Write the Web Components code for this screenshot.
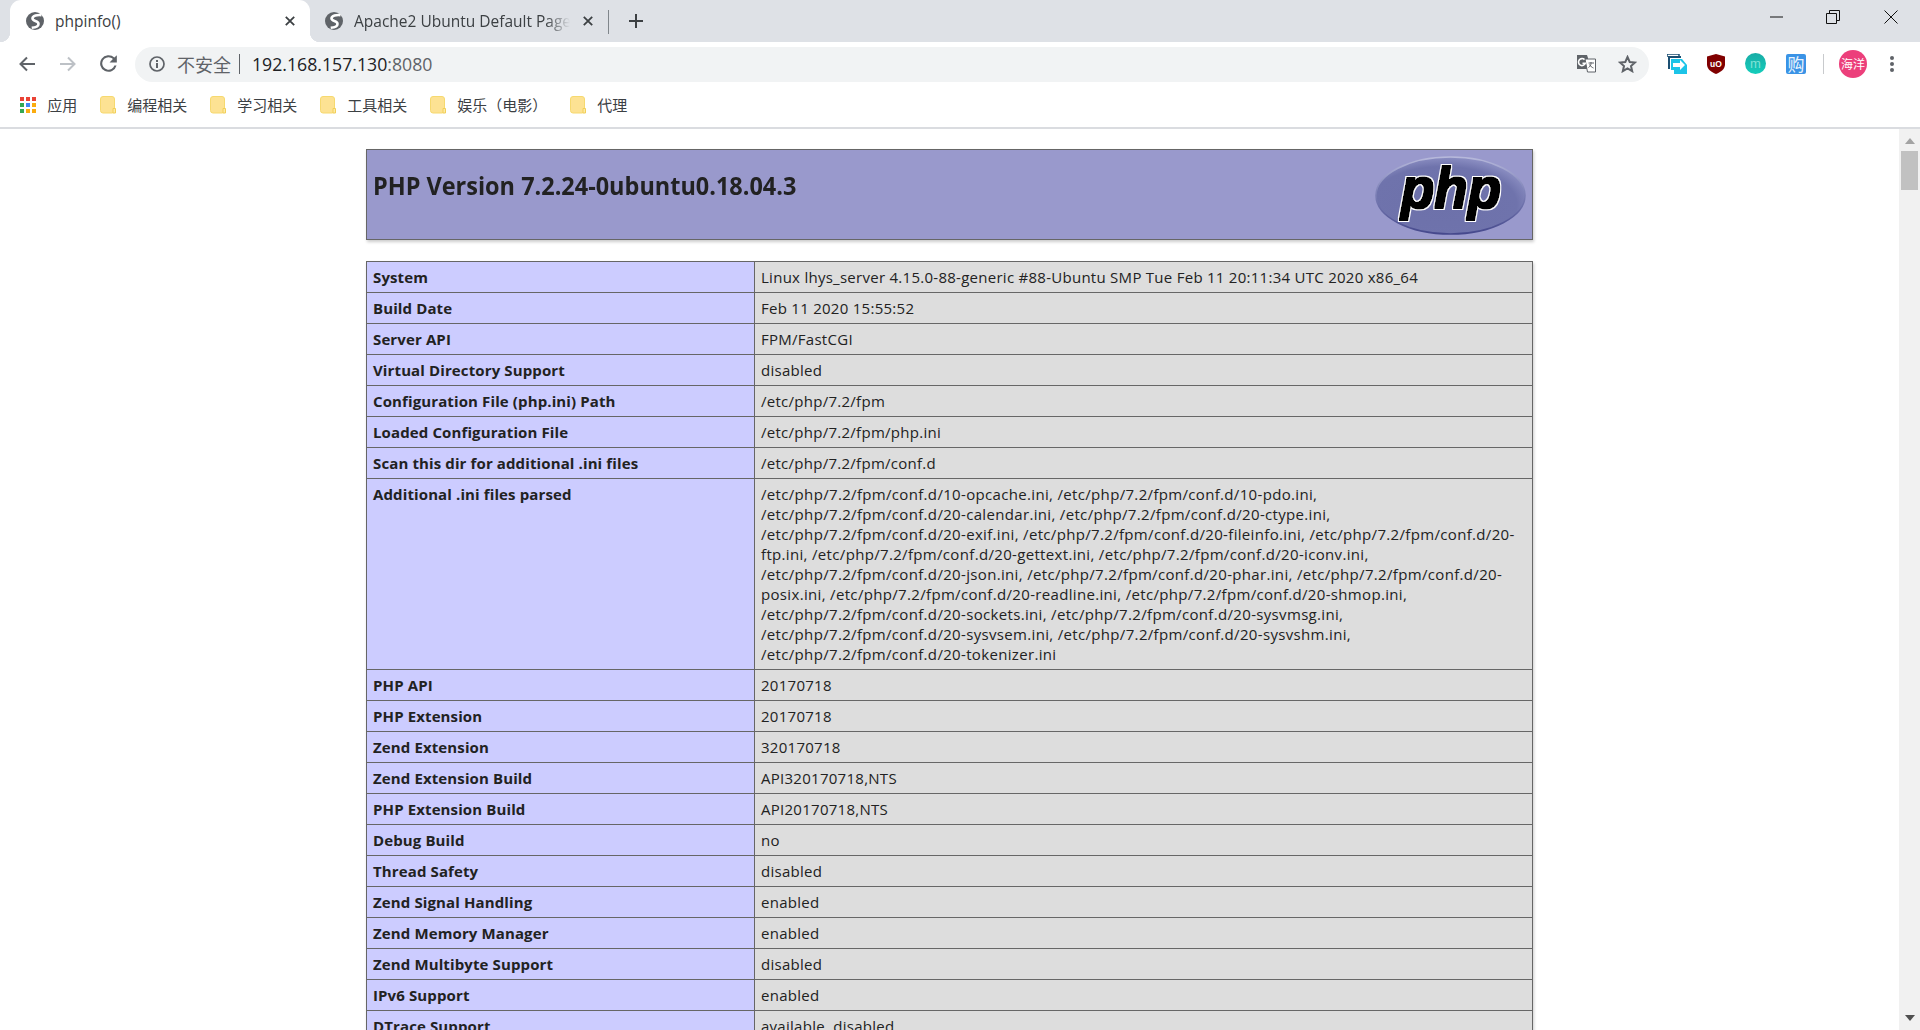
<!DOCTYPE html>
<html lang="zh">
<head>
<meta charset="utf-8">
<title>phpinfo()</title>
<style>
html,body{margin:0;height:100%;overflow:hidden;background:#fff}
body{font-family:"Open Sans","Noto Sans CJK SC",sans-serif}
</style>
</head>
<body>
<browser-window>
  <tab-strip slot="chrome">
    <browser-tab active>phpinfo()</browser-tab>
    <browser-tab>Apache2 Ubuntu Default Page</browser-tab>
  </tab-strip>
  <nav-toolbar slot="chrome"></nav-toolbar>
  <bookmark-bar slot="chrome">
    <bookmark-item kind="apps">应用</bookmark-item>
    <bookmark-item>编程相关</bookmark-item>
    <bookmark-item>学习相关</bookmark-item>
    <bookmark-item>工具相关</bookmark-item>
    <bookmark-item>娱乐（电影）</bookmark-item>
    <bookmark-item>代理</bookmark-item>
  </bookmark-bar>
  <page-view>
    <php-header>PHP Version 7.2.24-0ubuntu0.18.04.3</php-header>
    <php-table>
      <php-row label="System">Linux lhys_server 4.15.0-88-generic #88-Ubuntu SMP Tue Feb 11 20:11:34 UTC 2020 x86_64</php-row>
      <php-row label="Build Date">Feb 11 2020 15:55:52</php-row>
      <php-row label="Server API">FPM/FastCGI</php-row>
      <php-row label="Virtual Directory Support">disabled</php-row>
      <php-row label="Configuration File (php.ini) Path">/etc/php/7.2/fpm</php-row>
      <php-row label="Loaded Configuration File">/etc/php/7.2/fpm/php.ini</php-row>
      <php-row label="Scan this dir for additional .ini files">/etc/php/7.2/fpm/conf.d</php-row>
      <php-row wide label="Additional .ini files parsed">/etc/php/7.2/fpm/conf.d/10-opcache.ini, /etc/php/7.2/fpm/conf.d/10-pdo.ini,<br>/etc/php/7.2/fpm/conf.d/20-calendar.ini, /etc/php/7.2/fpm/conf.d/20-ctype.ini,<br>/etc/php/7.2/fpm/conf.d/20-exif.ini, /etc/php/7.2/fpm/conf.d/20-fileinfo.ini, /etc/php/7.2/fpm/conf.d/20-<br>ftp.ini, /etc/php/7.2/fpm/conf.d/20-gettext.ini, /etc/php/7.2/fpm/conf.d/20-iconv.ini,<br>/etc/php/7.2/fpm/conf.d/20-json.ini, /etc/php/7.2/fpm/conf.d/20-phar.ini, /etc/php/7.2/fpm/conf.d/20-<br>posix.ini, /etc/php/7.2/fpm/conf.d/20-readline.ini, /etc/php/7.2/fpm/conf.d/20-shmop.ini,<br>/etc/php/7.2/fpm/conf.d/20-sockets.ini, /etc/php/7.2/fpm/conf.d/20-sysvmsg.ini,<br>/etc/php/7.2/fpm/conf.d/20-sysvsem.ini, /etc/php/7.2/fpm/conf.d/20-sysvshm.ini,<br>/etc/php/7.2/fpm/conf.d/20-tokenizer.ini</php-row>
      <php-row label="PHP API">20170718</php-row>
      <php-row label="PHP Extension">20170718</php-row>
      <php-row label="Zend Extension">320170718</php-row>
      <php-row label="Zend Extension Build">API320170718,NTS</php-row>
      <php-row label="PHP Extension Build">API20170718,NTS</php-row>
      <php-row label="Debug Build">no</php-row>
      <php-row label="Thread Safety">disabled</php-row>
      <php-row label="Zend Signal Handling">enabled</php-row>
      <php-row label="Zend Memory Manager">enabled</php-row>
      <php-row label="Zend Multibyte Support">disabled</php-row>
      <php-row label="IPv6 Support">enabled</php-row>
      <php-row label="DTrace Support">available, disabled</php-row>
    </php-table>
  </page-view>
</browser-window>

<script>
const UI_FONT = `"Open Sans","Noto Sans CJK SC",sans-serif`;

// globe used as favicon on both tabs
const GLOBE = `<svg width="18" height="18" viewBox="0 0 18 18"><circle cx="9" cy="9" r="9" fill="#5f6368"/><path d="M15.500 3.200C11.500 2.700 6.500 3.600 6.500 6.600c0 3 6 1.900 6 5.300 0 2.400-3 3.500-6.800 3.900" fill="none" stroke="#fff" stroke-width="2.600"/></svg>`;

class BrowserWindow extends HTMLElement {
  constructor() {
    super();
    this.attachShadow({ mode: "open" });
    this.shadowRoot.innerHTML = `
    <style>
      :host{display:flex;flex-direction:column;height:100vh;overflow:hidden;font-family:${UI_FONT}}
    </style>
    <slot name="chrome"></slot>
    <slot></slot>`;
  }
}

class TabStrip extends HTMLElement {
  constructor() {
    super();
    this.attachShadow({ mode: "open" });
    this.shadowRoot.innerHTML = `
    <style>
      :host{display:flex;height:42px;flex:none;background:#dee1e6;padding-left:10px;box-sizing:border-box}
      .sep{width:1px;height:24px;background:#80868b;align-self:center;margin-top:1px}
      .plus{margin-left:19px;align-self:center;display:flex}
      .controls{margin-left:auto;display:flex;align-items:center;height:34px;padding-right:22px}
      .controls svg{display:block}
    </style>
    <slot></slot>
    <span class="sep"></span>
    <span class="plus"><svg width="16" height="16" viewBox="0 0 16 16"><path d="M8 1v14M1 8h14" stroke="#3c4043" stroke-width="2" fill="none"/></svg></span>
    <div class="controls">
      <svg width="13" height="2" viewBox="0 0 13 2" style="margin-right:43px"><path d="M0 1h13" stroke="#111" stroke-width="1"/></svg>
      <svg width="14" height="14" viewBox="0 0 14 14" style="margin-right:44px"><path d="M.5 3.500h10v10H.5zM3.500 3.500v-3h10v10h-3" fill="none" stroke="#111"/></svg>
      <svg width="14" height="14" viewBox="0 0 14 14"><path d="M.5.5l13 13M13.500.5l-13 13" stroke="#111" fill="none"/></svg>
    </div>`;
  }
}

class BrowserTab extends HTMLElement {
  constructor() {
    super();
    this.attachShadow({ mode: "open" });
    this.shadowRoot.innerHTML = `
    <style>
      :host{display:flex;align-items:center;position:relative;width:298px;height:42px;box-sizing:border-box;padding:0 15px;font-size:15.500px;color:#3c4043}
      :host([active]){width:300px;padding-left:16px;background:#fff;border-radius:11px 11px 0 0}
      :host([active])::before,:host([active])::after{content:"";position:absolute;bottom:0;width:10px;height:10px}
      :host([active])::before{left:-10px;background:radial-gradient(circle at 0 0,transparent 10px,#fff 10.500px)}
      :host([active])::after{right:-10px;background:radial-gradient(circle at 100% 0,transparent 10px,#fff 10.500px)}
      .icon{display:flex;margin-right:11px}
      .title{flex:1;white-space:nowrap;overflow:hidden;margin-right:13px;-webkit-mask-image:linear-gradient(to left,transparent,#000 24px)}
      :host([active]) .title{-webkit-mask-image:none}
      svg{display:block}
    </style>
    <span class="icon">${GLOBE}</span>
    <span class="title"><slot></slot></span>
    <svg width="10" height="10" viewBox="0 0 10 10"><path d="M.8.800l8.400 8.400M9.200.800L.8 9.200" stroke="#3c4043" stroke-width="1.800" fill="none"/></svg>`;
  }
}

class NavToolbar extends HTMLElement {
  constructor() {
    super();
    this.attachShadow({ mode: "open" });
    this.shadowRoot.innerHTML = `
    <style>
      :host{display:flex;align-items:center;height:43px;flex:none;background:#fff;padding-left:18px;box-sizing:border-box}
      svg{display:block;flex:none}
      .omnibox{display:flex;align-items:center;width:1514px;height:35px;margin-left:14.500px;background:#f1f3f4;border-radius:18px;padding:0 12px 0 14px;box-sizing:border-box;margin-top:1px}
      .warn{font-size:18px;color:#5f6368;margin-left:12px;font-family:"Noto Sans CJK SC",sans-serif;line-height:1}
      .bar{width:1px;height:20px;background:#5f6368;margin:0 12px 0 8px}
      .url{font-size:17.700px;color:#202124}
      .url span{color:#5f6368}
      .end{margin-left:auto;display:flex;align-items:center;gap:22px}
      .ext{margin-left:18px}
      .divider{width:1px;height:20px;background:#c8cacd;margin:0 15px 0 17px}
      .avatar{width:28px;height:28px;border-radius:50%;background:#ec3f7b;color:#fff;font:12px/28px "Noto Sans CJK SC",sans-serif;text-align:center;flex:none;white-space:nowrap}
      .dots{margin-left:23px}
      .badge{font-family:"Liberation Sans",sans-serif}
    </style>
    <svg width="18" height="18" viewBox="0 0 18 18"><path d="M17 9H3M9 2.500L2.500 9 9 15.500" fill="none" stroke="#5f6368" stroke-width="2"/></svg>
    <svg width="18" height="18" viewBox="0 0 18 18" style="margin-left:23px"><path d="M1 9h14M9 2.500L15.500 9 9 15.500" fill="none" stroke="#bdc1c6" stroke-width="2"/></svg>
    <svg width="25" height="25" viewBox="0 0 24 24" style="margin-left:18.500px"><path d="M17.650 6.350A8 8 0 1 0 19.730 14h-2.080A6 6 0 1 1 12 6c1.660 0 3.140.69 4.220 1.780L13 11h7V4z" fill="#5f6368"/></svg>
    <div class="omnibox">
      <svg width="16" height="16" viewBox="0 0 16 16"><circle cx="8" cy="8" r="7" fill="none" stroke="#5f6368" stroke-width="1.700"/><path d="M7 7h2v5H7zM7 4h2v2H7z" fill="#5f6368"/></svg>
      <span class="warn">不安全</span><span class="bar"></span>
      <span class="url">192.168.157.130<span>:8080</span></span>
      <div class="end">
        <svg width="19" height="18" viewBox="0 0 19 18"><path d="M0 0h10l1 3v11H0z" fill="#5f6368"/><path d="M8 4h10.500v13H10.500z" fill="#fff" stroke="#5f6368"/><path d="M7.500 4.600A3.500 3.500 0 1 0 8.300 8.300H5.500" fill="none" stroke="#fff" stroke-width="1.600"/><path d="M11.500 8h5.500M14 7v1.500c0 2-1.500 3.500-2.500 4M12.500 9.500c.7 1.500 2.500 3 4 3.500" fill="none" stroke="#5f6368"/></svg>
        <svg width="19" height="18" viewBox="0 0 19 18"><path d="M9.500 2l2.200 5 5.300.5-4 3.500 1.200 5.200-4.700-2.700-4.700 2.700L6 11 2 7.500 7.300 7z" fill="none" stroke="#5f6368" stroke-width="2"/></svg>
      </div>
    </div>
    <svg class="ext" width="20" height="20" viewBox="0 0 20 20"><path d="M0 3V0h12v2" fill="none" stroke="#1c4f72" stroke-width="1.500"/><path d="M2 15V3h12" fill="none" stroke="#1c4f72" stroke-width="2"/><path d="M4 5h11l5 6v9H7v-4H4z" fill="#1cc4e8"/><path d="M6 9h7V6l5 5-5 5v-3H6z" fill="#fff"/></svg>
    <svg width="20" height="20" viewBox="0 0 20 20" style="margin-left:19px"><path d="M10 0l9 2.500v8C19 15 15 18 10 20 5 18 1 15 1 10.500v-8z" fill="#800000"/><text class="badge" x="10" y="12.500" font-size="8.500" font-weight="700" fill="#fff" text-anchor="middle">uO</text></svg>
    <svg width="21" height="21" viewBox="0 0 21 21" style="margin-left:19px"><defs><linearGradient id="teal" x1="0" y1="0" x2="0" y2="1"><stop offset="0" stop-color="#19aca6"/><stop offset="1" stop-color="#14cdbb"/></linearGradient></defs><circle cx="10.500" cy="10.500" r="10.500" fill="url(#teal)"/><text class="badge" x="10.500" y="14.500" font-size="13" fill="#7fe3d6" text-anchor="middle">m</text></svg>
    <svg width="20" height="20" viewBox="0 0 20 20" style="margin-left:20px"><rect width="20" height="20" rx="2" fill="#3a93e6"/><text x="10" y="16.500" font-size="17" fill="#eaf4fd" text-anchor="middle" font-family="Noto Sans CJK SC">购</text></svg>
    <span class="divider"></span>
    <div class="avatar">海洋</div>
    <svg class="dots" width="4" height="16" viewBox="0 0 4 16"><circle cx="2" cy="2" r="2" fill="#5f6368"/><circle cx="2" cy="8" r="2" fill="#5f6368"/><circle cx="2" cy="14" r="2" fill="#5f6368"/></svg>`;
  }
}

class BookmarkBar extends HTMLElement {
  constructor() {
    super();
    this.attachShadow({ mode: "open" });
    this.shadowRoot.innerHTML = `
    <style>
      :host{display:flex;align-items:center;gap:22.700px;height:44px;flex:none;box-sizing:border-box;padding:0 0 2px 20px;background:#fff;border-bottom:2px solid #dadce0}
    </style>
    <slot></slot>`;
  }
}

class BookmarkItem extends HTMLElement {
  constructor() {
    super();
    this.attachShadow({ mode: "open" });
    const apps = this.getAttribute("kind") === "apps";
    const colors = ["#ea4335","#ea4335","#ea4335","#34a853","#4285f4","#fbac0f","#34a853","#fbac0f","#fbac0f"];
    const icon = apps
      ? `<svg width="16" height="16" viewBox="0 0 16 16">${colors.map((c, i) => `<rect x="${(i % 3) * 6}" y="${Math.floor(i / 3) * 6}" width="4" height="4" fill="${c}"/>`).join("")}</svg>`
      : `<svg width="16" height="18" viewBox="0 0 16 18"><rect x=".5" y=".5" width="14" height="16.500" rx="2.500" fill="#fde293" stroke="#f6d96f"/><path d="M13 12.500h2.500V17H13z" fill="#fdeaa8" stroke="#f2cf57"/></svg>`;
    this.shadowRoot.innerHTML = `
    <style>
      :host{display:flex;align-items:center;gap:11.300px;font-size:15px;line-height:20px;color:#3c4043;font-family:"Noto Sans CJK SC",sans-serif}
      svg{display:block}
    </style>
    ${icon}<slot></slot>`;
  }
}

class PageView extends HTMLElement {
  constructor() {
    super();
    this.attachShadow({ mode: "open" });
    this.shadowRoot.innerHTML = `
    <style>
      :host{display:flex;flex:1;min-height:0;background:#fff}
      .content{flex:1;min-width:0;overflow:hidden;display:flex;flex-direction:column;align-items:center;padding-top:20px;box-sizing:border-box;gap:21px}
      .bar{width:21px;flex:none;background:#f1f1f1;display:flex;flex-direction:column;align-items:center}
      .up{margin-top:9px}
      .thumb{width:17px;height:39px;background:#c1c1c1;margin-top:7px}
      .down{margin-top:auto;margin-bottom:9px}
    </style>
    <div class="content"><slot></slot></div>
    <div class="bar">
      <svg class="up" width="10" height="6" viewBox="0 0 10 6"><path d="M5 0l5 6H0z" fill="#a3a3a3"/></svg>
      <div class="thumb"></div>
      <svg class="down" width="10" height="6" viewBox="0 0 10 6"><path d="M5 6L0 0h10z" fill="#505050"/></svg>
    </div>`;
  }
}

class PhpHeader extends HTMLElement {
  constructor() {
    super();
    this.attachShadow({ mode: "open" });
    this.shadowRoot.innerHTML = `
    <style>
      :host{display:flex;justify-content:space-between;align-items:flex-start;flex:none;width:1167px;height:91px;box-sizing:border-box;border:1px solid #666;background:#99c;box-shadow:1px 2px 3px #ccc;padding:6px 6px 0 6px;color:#222}
      h1{margin:11px 0 0;font-size:25.500px;line-height:36px;font-weight:700;white-space:nowrap;transform:scaleX(.92);transform-origin:0 50%}
      svg{display:block}
      text{font:italic 700 58px "Liberation Sans",sans-serif}
    </style>
    <h1><slot></slot></h1>
    <svg width="151" height="79" viewBox="0 0 151 79">
      <defs>
        <radialGradient id="oval" cx="45%" cy="62%" r="62%">
          <stop offset="0" stop-color="#6d71aa"/><stop offset=".8" stop-color="#6f73ac"/><stop offset="1" stop-color="#8b8ec2"/>
        </radialGradient>
        <linearGradient id="rim" x1="0" y1="0" x2="0" y2="1">
          <stop offset="0" stop-color="#b7b9db"/><stop offset=".45" stop-color="#7f83b8"/><stop offset="1" stop-color="#45488c"/>
        </linearGradient>
        <filter id="outline" x="-10%" y="-10%" width="120%" height="120%">
          <feMorphology in="SourceAlpha" operator="dilate" radius="1.100" result="core"/>
          <feMorphology in="SourceAlpha" operator="dilate" radius="2.200" result="halo"/>
          <feFlood flood-color="#fff"/><feComposite in2="halo" operator="in" result="white"/>
          <feFlood flood-color="#000"/><feComposite in2="core" operator="in" result="black"/>
          <feMerge><feMergeNode in="white"/><feMergeNode in="black"/></feMerge>
        </filter>
      </defs>
      <ellipse cx="75.500" cy="39.500" rx="74.500" ry="38.500" fill="url(#oval)" stroke="url(#rim)" stroke-width="1.500"/>
      <text x="76" y="52" text-anchor="middle" textLength="100" lengthAdjust="spacingAndGlyphs" fill="#000" filter="url(#outline)">php</text>
    </svg>`;
  }
}

class PhpTable extends HTMLElement {
  constructor() {
    super();
    this.attachShadow({ mode: "open" });
    this.shadowRoot.innerHTML = `
    <style>
      :host{display:block;flex:none;width:1167px;box-sizing:border-box;border:1px solid #666;border-bottom:0;box-shadow:1px 2px 3px #ccc;font-size:15px;line-height:20px;color:#222}
    </style>
    <slot></slot>`;
  }
}

class PhpRow extends HTMLElement {
  constructor() {
    super();
    this.attachShadow({ mode: "open" });
    this.shadowRoot.innerHTML = `
    <style>
      :host{display:grid;grid-template-columns:388px 1fr;border-bottom:1px solid #666}
      .e,.v{padding:5px 6px;white-space:nowrap}
      .e{background:#ccf;font-weight:700;border-right:1px solid #666;letter-spacing:.12px}
      .v{background:#ddd;letter-spacing:.27px}
      :host([wide]) .v{letter-spacing:.33px}
    </style>
    <div class="e"></div>
    <div class="v"><slot></slot></div>`;
    this.shadowRoot.querySelector(".e").textContent = this.getAttribute("label");
  }
}

customElements.define("browser-window", BrowserWindow);
customElements.define("tab-strip", TabStrip);
customElements.define("browser-tab", BrowserTab);
customElements.define("nav-toolbar", NavToolbar);
customElements.define("bookmark-bar", BookmarkBar);
customElements.define("bookmark-item", BookmarkItem);
customElements.define("page-view", PageView);
customElements.define("php-header", PhpHeader);
customElements.define("php-table", PhpTable);
customElements.define("php-row", PhpRow);
</script>
</body>
</html>
